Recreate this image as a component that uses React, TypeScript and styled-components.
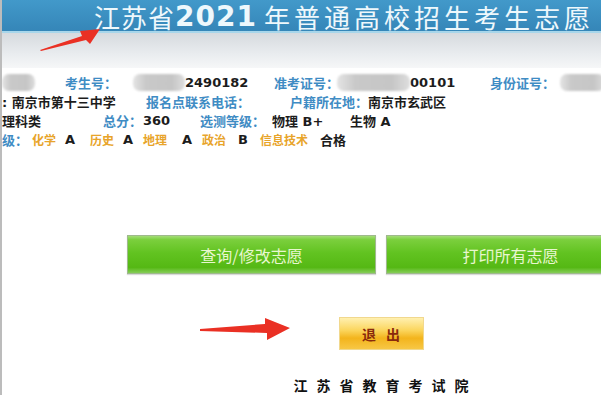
import React from "react";
import styled, { createGlobalStyle } from "styled-components";

const Global = createGlobalStyle`
  html, body { margin: 0; padding: 0; background: #fff; overflow: hidden; }
  body { font-family: "DejaVu Sans", "Noto Sans CJK SC", sans-serif; }
`;

const Page = styled.div`
  position: relative;
  width: 601px;
  height: 395px;
  overflow: hidden;
  box-sizing: border-box;
  border-left: 2px solid #bcbcbc;
  background: #fff;
`;

const Header = styled.div`
  height: 33px;
  box-sizing: border-box;
  padding: 2px 0 0 92px;
  background: linear-gradient(#4299ca, #3586b8);
  border-bottom: 2px solid #a8d6ea;
  display: flex;
  align-items: center;
  white-space: nowrap;
  color: #eef8fc;
  font-family: "Noto Sans CJK SC", sans-serif;
  font-size: 26px;
  line-height: 1;
`;

const TitlePart = styled.span<{ $ls: number }>`
  letter-spacing: ${(p) => p.$ls}px;
`;

const Year = styled.span`
  font-family: "DejaVu Sans", sans-serif;
  font-weight: bold;
  font-size: 28px;
  letter-spacing: 1px;
  margin: 0 7px 0 0;
`;

const Band = styled.div`
  height: 35px;
  background: linear-gradient(#d6dade, #e9ecef 60%, #f6f7f8);
`;

const Info = styled.div`
  margin-top: 5px;
  display: flex;
  flex-direction: column;
`;

const Row = styled.div`
  display: flex;
  height: 19px;
  align-items: center;
  white-space: nowrap;
  font-weight: bold;
  font-size: 13px;
`;

const Cell = styled.div<{ $w?: number; $c?: string; $fs?: number }>`
  ${(p) => (p.$w ? `width: ${p.$w}px; flex: none;` : "flex: 1;")}
  color: ${(p) => p.$c || "#1c1c1c"};
  font-size: ${(p) => p.$fs || 13}px;
  overflow: visible;
`;

const Blur = styled.div<{ $w: number }>`
  width: ${(p) => p.$w}px;
  flex: none;
  height: 17px;
  border-radius: 7px;
  background: linear-gradient(90deg, #e4e4e4, #c9c9c9 25%, #c6c6c6 75%, #dedede);
  filter: blur(1px);
`;

const BLUE = "#3f8cc4";
const ORANGE = "#e8a42a";

const Buttons = styled.div`
  margin: 86px 0 0 125px;
  display: flex;
  gap: 10px;
`;

const GreenButton = styled.div`
  flex: none;
  width: 249px;
  height: 39px;
  box-sizing: border-box;
  border: 1px solid #9fb98d;
  background: linear-gradient(
    #a4dc78 0%,
    #7bcf3d 10%,
    #62c321 45%,
    #55b814 85%,
    #86cd58 100%
  );
  box-shadow: 0 1px 1px rgba(0, 0, 0, 0.15);
  display: flex;
  align-items: center;
  justify-content: center;
  color: #e8f7cf;
  font-family: "Noto Sans CJK SC", sans-serif;
  font-size: 16px;
`;

const Column = styled.div`
  margin-left: 125px;
  width: 508px;
  display: flex;
  flex-direction: column;
  align-items: center;
`;

const ExitButton = styled.div`
  margin-top: 43px;
  width: 85px;
  height: 33px;
  box-sizing: border-box;
  border: 1px solid #f1d88e;
  background: linear-gradient(#fff0b0, #fbd55c 40%, #f3b41c 65%, #f7c745);
  display: flex;
  align-items: center;
  justify-content: center;
  color: #8a2a0c;
  font-weight: bold;
  font-size: 14px;
  font-family: "Noto Sans CJK SC", sans-serif;
  letter-spacing: 10px;
  padding-left: 10px;
`;

const Footer = styled.div`
  margin-top: 25px;
  font-family: "Noto Sans CJK SC", sans-serif;
  font-weight: bold;
  font-size: 14px;
  color: #111;
  letter-spacing: 9px;
  padding-left: 9px;
`;

const Overlay = styled.svg`
  position: absolute;
  left: -2px;
  top: 0;
  pointer-events: none;
`;

export default function App() {
  return (
    <>
      <Global />
      <Page>
        <Header>
          <TitlePart $ls={1}>江苏省</TitlePart>
          <Year>2021</Year>
          <TitlePart $ls={4}>年普通高校招生考生志愿</TitlePart>
        </Header>
        <Band />
        <Info>
          <Row>
            <Blur $w={33} />
            <Cell $w={30} />
            <Cell $w={68} $c={BLUE}>考生号：</Cell>
            <Blur $w={52} />
            <Cell $w={89}>2490182</Cell>
            <Cell $w={63} $c={BLUE}>准考证号：</Cell>
            <Blur $w={73} />
            <Cell $w={80}>00101</Cell>
            <Cell $w={70} $c={BLUE}>身份证号：</Cell>
            <Blur $w={45} />
          </Row>
          <Row>
            <Cell $w={144}>: 南京市第十三中学</Cell>
            <Cell $w={144} $c={BLUE}>报名点联系电话：</Cell>
            <Cell $w={78} $c={BLUE}>户籍所在地：</Cell>
            <Cell>南京市玄武区</Cell>
          </Row>
          <Row>
            <Cell $w={101}>理科类</Cell>
            <Cell $w={40} $c={BLUE}>总分：</Cell>
            <Cell $w={57}>360</Cell>
            <Cell $w={72} $c={BLUE}>选测等级：</Cell>
            <Cell $w={78}>物理 B+</Cell>
            <Cell>生物 A</Cell>
          </Row>
          <Row>
            <Cell $w={30} $c={BLUE}>级：</Cell>
            <Cell $w={33} $c={ORANGE} $fs={12}>化学</Cell>
            <Cell $w={25}>A</Cell>
            <Cell $w={33} $c={ORANGE} $fs={12}>历史</Cell>
            <Cell $w={20}>A</Cell>
            <Cell $w={39} $c={ORANGE} $fs={12}>地理</Cell>
            <Cell $w={20}>A</Cell>
            <Cell $w={36} $c={ORANGE} $fs={12}>政治</Cell>
            <Cell $w={22}>B</Cell>
            <Cell $w={60} $c={ORANGE} $fs={12}>信息技术</Cell>
            <Cell>合格</Cell>
          </Row>
        </Info>
        <Buttons>
          <GreenButton>查询/修改志愿</GreenButton>
          <GreenButton>打印所有志愿</GreenButton>
        </Buttons>
        <Column>
          <ExitButton>退出</ExitButton>
          <Footer>江苏省教育考试院</Footer>
        </Column>
        <Overlay width="601" height="395" viewBox="0 0 601 395">
          <polygon
            points="40,50 82,36 80,31 100,29 90,44 86,40 41,51"
            fill="#ea3024"
          />
          <polygon
            points="200,329 265,324 265,318 290,328 267,340 267,333 200,331"
            fill="#ea3024"
          />
        </Overlay>
      </Page>
    </>
  );
}
